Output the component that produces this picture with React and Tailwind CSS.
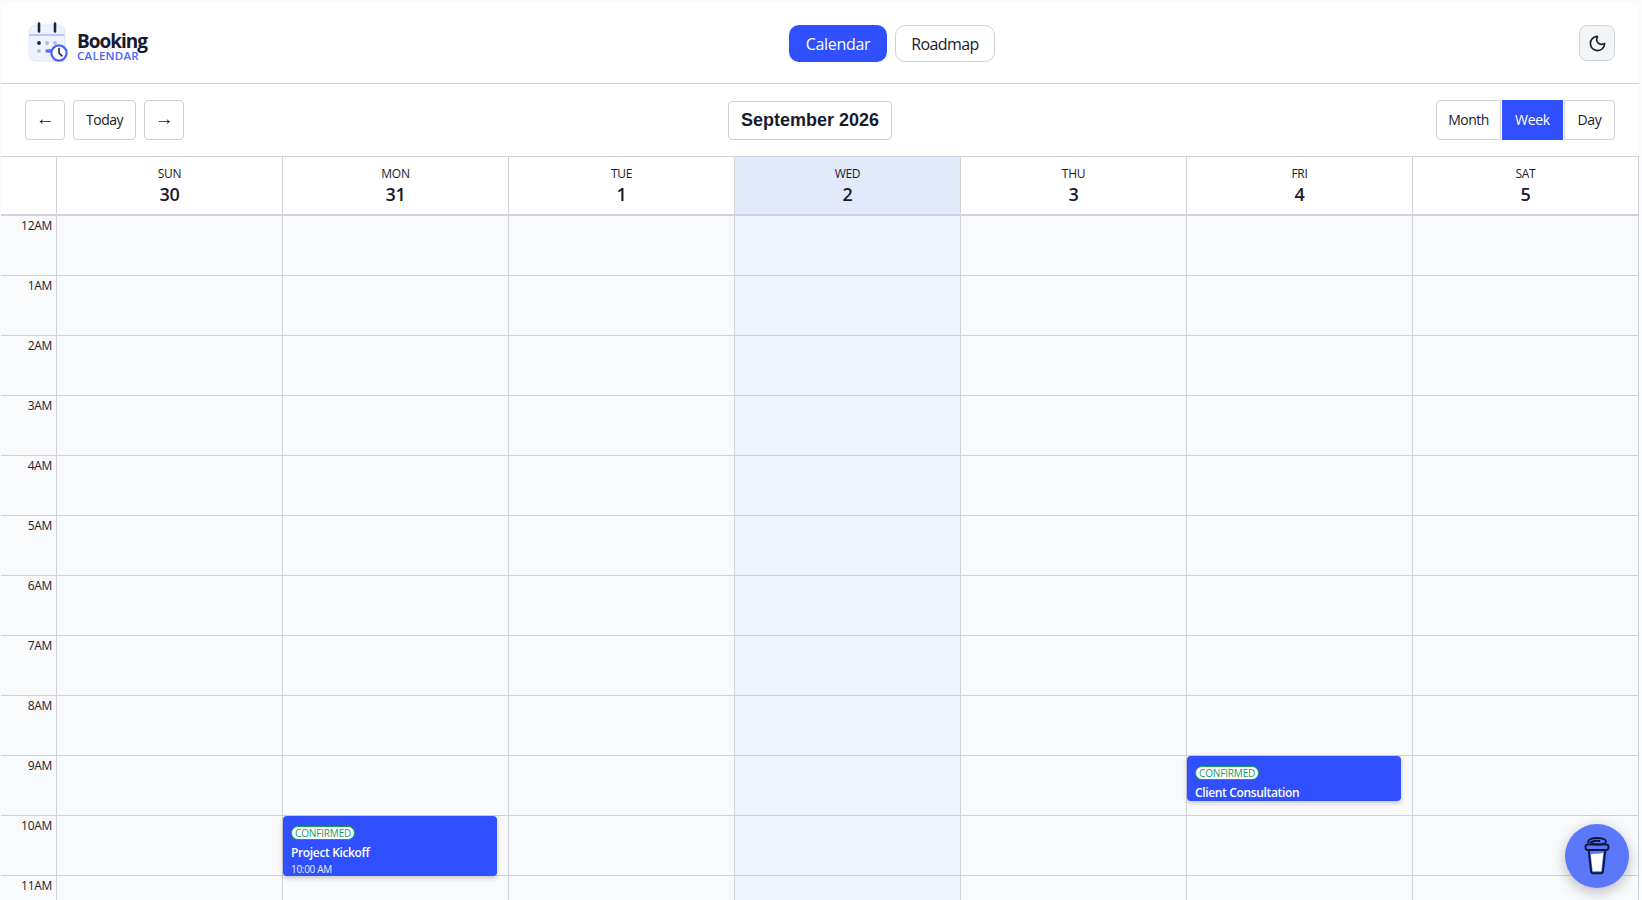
import React from "react";
import { Moon } from "lucide-react";

const days = [
  { d: "SUN", n: "30" },
  { d: "MON", n: "31" },
  { d: "TUE", n: "1" },
  { d: "WED", n: "2", today: true },
  { d: "THU", n: "3" },
  { d: "FRI", n: "4" },
  { d: "SAT", n: "5" },
];
const hours = ["12AM","1AM","2AM","3AM","4AM","5AM","6AM","7AM","8AM","9AM","10AM","11AM"];

function Logo() {
  return (
    <svg width="42" height="42" viewBox="0 0 42 42" fill="none" className="shrink-0">
      <rect x="1" y="3" width="36" height="36" rx="7" fill="#eef1fe" stroke="#e0e5fd" />
      <path d="M1.500 13h35" stroke="#a9b6fb" strokeWidth="1.6" />
      <path d="M11 1.500v8M27 1.500v8" stroke="#1f2440" strokeWidth="2.600" strokeLinecap="round" />
      <circle cx="11" cy="21" r="1.900" fill="#1f2440" />
      <circle cx="19" cy="21" r="1.900" fill="#b4b9d6" />
      <circle cx="27" cy="21" r="1.900" fill="#b4b9d6" />
      <circle cx="11" cy="29" r="1.900" fill="#b4b9d6" />
      <path d="M19 29h6" stroke="#5a74fb" strokeWidth="3.400" strokeLinecap="round" />
      <circle cx="31" cy="31" r="7.600" fill="#fff" stroke="#4a63ff" strokeWidth="2.2" />
      <path d="M31 26.500V31l3 2.800" stroke="#1f2440" strokeWidth="1.6" strokeLinecap="round" strokeLinejoin="round" />
    </svg>
  );
}

function Cup() {
  return (
    <svg width="30" height="40" viewBox="0 0 30 40" fill="none">
      <path d="M6.500 13l2.600 22.500c.1 1 1 1.700 2 1.700h7.800c1 0 1.900-.7 2-1.700L23.500 13z" fill="#5b78fb" stroke="#10163a" strokeWidth="2" />
      <path d="M8.800 18.500c4-1.600 8-.2 12.400-1.600l-1.900 18.300H10.700z" fill="#fff" />
      <rect x="3.500" y="8.500" width="23" height="5.500" rx="2.400" fill="#5b78fb" stroke="#10163a" strokeWidth="2" />
      <path d="M6 6.500C6 3.500 10 2 15 2s9 1.400 9 3.500c0 2-4 3-8.500 3C12.500 8.500 10 7.800 8.500 6.500c2-1.500 6-2 9-1.500" stroke="#10163a" strokeWidth="1.800" strokeLinecap="round" />
    </svg>
  );
}

function EventCard({ height, title, time }) {
  return (
    <div className={`absolute top-0 left-0 w-[214px] ${height} overflow-hidden rounded-[4px] bg-[#304ffe] px-2 pt-[10px] text-white shadow-[0_2px_5px_rgba(0,0,0,0.22)]`}>
      <div className="flex">
        <span className="flex h-[14px] items-center rounded-[7px] border border-[#16a34a] bg-white px-[3px] text-[10px] leading-none font-medium tracking-[-0.15px] text-[#159a6a]">CONFIRMED</span>
      </div>
      <div className="mt-[5px] text-[12px] leading-[16px] font-semibold tracking-[-0.35px]">{title}</div>
      {time && <div className="mt-[1px] text-[10px] leading-[14px] opacity-90">{time}</div>}
    </div>
  );
}

const btn = "flex h-10 items-center justify-center rounded border border-[#d1d1db] bg-white text-sm text-[#1a1a2e]";
const arrow = "font-['Liberation_Sans',sans-serif] text-[19px] pb-[2px]";

export default function App() {
  return (
    <div className="h-screen overflow-hidden bg-[#f9fafb] pt-[3px] pr-[3px] pl-px font-['Open_Sans','Noto_Sans',sans-serif] tracking-[-0.3px] text-[#1a1a2e]">
      <div className="bg-white">
        <header className="flex h-[81px] items-center justify-between border-b border-[#d1d1db] px-[24px]">
          <div className="flex w-[180px] items-center">
            <div className="mr-[7px] ml-[3px]"><Logo /></div>
            <div className="mt-[7px] flex flex-col">
              <span className="text-[19px] leading-[18px] font-bold tracking-[-1px]">Booking</span>
              <span className="text-[11.500px] leading-[11px] font-semibold tracking-[0.25px] text-[#4a63ff]">CALENDAR</span>
            </div>
          </div>
          <nav className="flex gap-2">
            <button className="h-[37px] w-[98px] rounded-[10px] bg-[#304ffe] pt-[2px] text-[16px] text-white">Calendar</button>
            <button className="h-[37px] w-[100px] rounded-[10px] border border-[#d1d1db] bg-white pt-[2px] text-[16px] tracking-[-0.6px]">Roadmap</button>
          </nav>
          <button className="flex h-9 w-9 items-center justify-center rounded-[8px] border border-[#d1d5db] bg-[#f3f4f6]">
            <Moon size={19} strokeWidth={2} color="#1a1a2e" />
          </button>
        </header>

        <div className="flex h-[73px] items-center justify-between border-b border-[#d1d1db] px-[24px]">
          <div className="flex gap-2">
            <button className={`${btn} ${arrow} w-10`}>←</button>
            <button className={`${btn} w-[63px] tracking-[-0.5px]`}>Today</button>
            <button className={`${btn} ${arrow} w-10`}>→</button>
          </div>
          <div className="mt-[1px] flex h-[39px] w-[164px] items-center justify-center rounded border border-[#d1d1db] bg-white font-['Liberation_Sans',sans-serif] text-[18px] font-bold tracking-normal">
            September 2026
          </div>
          <div className="flex w-[179px]">
            <button className="flex h-10 w-[65px] items-center justify-center rounded-l border border-[#d1d1db] bg-white text-sm tracking-[-0.5px]">Month</button>
            <button className="ml-px flex h-10 w-[61px] items-center justify-center bg-[#304ffe] text-sm text-white">Week</button>
            <button className="ml-px flex h-10 w-[51px] items-center justify-center rounded-r border border-[#d1d1db] bg-white text-sm">Day</button>
          </div>
        </div>

        <div className="grid grid-cols-[56px_repeat(7,226px)] border-b-2 border-[#d1d1db]">
          <div className="h-[57px] border-r border-[#d1d1db]"></div>
          {days.map((x) => (
            <div key={x.d} className={`flex h-[57px] flex-col items-center border-r border-[#d1d1db] pt-[9px] ${x.today ? "bg-[#e1e9fb]" : "bg-white"}`}>
              <span className="text-[12px] leading-[16px]">{x.d}</span>
              <span className="text-[18px] leading-[24px] font-semibold">{x.n}</span>
            </div>
          ))}
        </div>

        <div className="grid grid-cols-[56px_repeat(7,226px)] bg-[#f9fafc]">
          <div>
            {hours.map((h) => (
              <div key={h} className="h-[60px] border-r border-b border-[#d1d1db] pt-[2px] pr-1 text-right text-[12px] leading-[16px]">{h}</div>
            ))}
          </div>
          {days.map((x) => (
            <div key={x.d} className={x.today ? "bg-[#eff3fb]" : ""}>
              {hours.map((h) => (
                <div key={h} className="relative h-[60px] border-r border-b border-[#d1d1db]">
                  {x.d === "MON" && h === "10AM" && <EventCard height="h-[60px]" title="Project Kickoff" time="10:00 AM" />}
                  {x.d === "FRI" && h === "9AM" && <EventCard height="h-[45px]" title="Client Consultation" />}
                </div>
              ))}
            </div>
          ))}
        </div>
      </div>

      <button className="fixed right-[13px] bottom-[12px] flex h-16 w-16 items-center justify-center rounded-full bg-[#5b78fb] shadow-[0_4px_14px_rgba(0,0,0,0.25)]">
        <Cup />
      </button>
    </div>
  );
}
